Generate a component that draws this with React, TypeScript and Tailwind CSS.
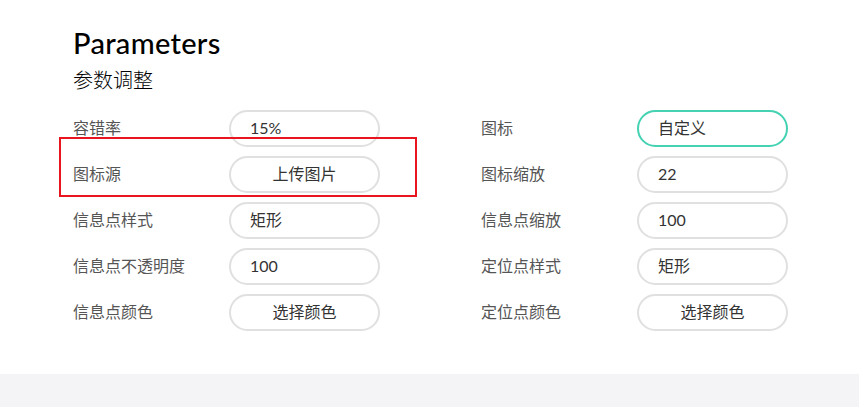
import React from 'react'

type Field = { label: string; value: string; center?: boolean; active?: boolean }

const left: Field[] = [
  { label: '容错率', value: '15%' },
  { label: '图标源', value: '上传图片', center: true },
  { label: '信息点样式', value: '矩形' },
  { label: '信息点不透明度', value: '100' },
  { label: '信息点颜色', value: '选择颜色', center: true },
]

const right: Field[] = [
  { label: '图标', value: '自定义', active: true },
  { label: '图标缩放', value: '22' },
  { label: '信息点缩放', value: '100' },
  { label: '定位点样式', value: '矩形' },
  { label: '定位点颜色', value: '选择颜色', center: true },
]

const font = { fontFamily: '"Lato", "Noto Sans CJK SC", sans-serif' }

function Row({ f }: { f: Field }) {
  return (
    <div className="flex items-center h-[46px]">
      <div className="w-[156px] text-[16px] text-[#555]">{f.label}</div>
      <div
        className={`w-[151px] h-[37px] rounded-full border-2 flex items-center text-[16px] text-[#333] ${
          f.active ? 'border-[#44d2b3]' : 'border-[#e0e0e0]'
        } ${f.center ? 'justify-center' : 'pl-[19px]'}`}
      >
        {f.value}
      </div>
    </div>
  )
}

export default function App() {
  return (
    <div className="min-h-screen bg-white relative" style={font}>
      <div className="h-[374px] pl-[73px] pt-[25px]">
        <h1 className="text-[29px] leading-[36px] text-black font-medium tracking-[0.3px]">
          Parameters
        </h1>
        <h2 className="text-[20px] leading-[28px] text-black font-light mt-[5px]">参数调整</h2>
        <div className="flex mt-[11px]">
          <div className="w-[408px] flex flex-col">
            {left.map((f) => (
              <Row key={f.label} f={f} />
            ))}
          </div>
          <div className="flex flex-col">
            {right.map((f) => (
              <Row key={f.label} f={f} />
            ))}
          </div>
        </div>
      </div>
      <div className="h-[33px] bg-[#f4f4f6]" />
      {/* annotation */}
      <div className="absolute left-[59px] top-[137px] w-[358px] h-[60px] border-2 border-[#e8141e] pointer-events-none" />
    </div>
  )
}
